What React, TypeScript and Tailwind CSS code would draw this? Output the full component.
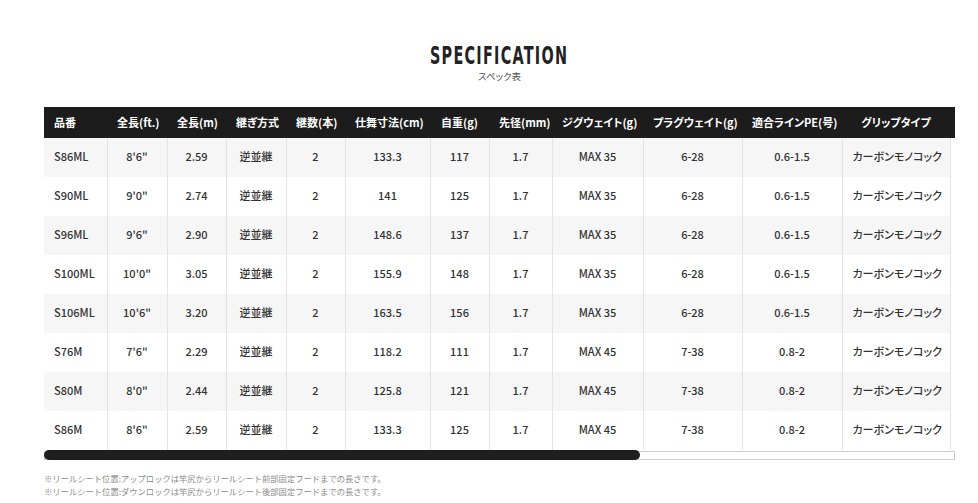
const columns = [
  { label: "品番", w: "w-[63px]" },
  { label: "全長(ft.)", w: "w-[60px]" },
  { label: "全長(m)", w: "w-[59px]" },
  { label: "継ぎ方式", w: "w-[60px]" },
  { label: "継数(本)", w: "w-[59px]" },
  { label: "仕舞寸法(cm)", w: "w-[85px]" },
  { label: "自重(g)", w: "w-[59px]" },
  { label: "先径(mm)", w: "w-[63px]" },
  { label: "ジグウェイト(g)", w: "w-[91px]" },
  { label: "プラグウェイト(g)", w: "w-[99px]" },
  { label: "適合ラインPE(号)", w: "w-[100px]" },
  { label: "グリップタイプ", w: "w-[108px]" },
];

const rows = [
  ["S86ML", "8'6\"", "2.59", "逆並継", "2", "133.3", "117", "1.7", "MAX 35", "6-28", "0.6-1.5", "カーボンモノコック"],
  ["S90ML", "9'0\"", "2.74", "逆並継", "2", "141", "125", "1.7", "MAX 35", "6-28", "0.6-1.5", "カーボンモノコック"],
  ["S96ML", "9'6\"", "2.90", "逆並継", "2", "148.6", "137", "1.7", "MAX 35", "6-28", "0.6-1.5", "カーボンモノコック"],
  ["S100ML", "10'0\"", "3.05", "逆並継", "2", "155.9", "148", "1.7", "MAX 35", "6-28", "0.6-1.5", "カーボンモノコック"],
  ["S106ML", "10'6\"", "3.20", "逆並継", "2", "163.5", "156", "1.7", "MAX 35", "6-28", "0.6-1.5", "カーボンモノコック"],
  ["S76M", "7'6\"", "2.29", "逆並継", "2", "118.2", "111", "1.7", "MAX 45", "7-38", "0.8-2", "カーボンモノコック"],
  ["S80M", "8'0\"", "2.44", "逆並継", "2", "125.8", "121", "1.7", "MAX 45", "7-38", "0.8-2", "カーボンモノコック"],
  ["S86M", "8'6\"", "2.59", "逆並継", "2", "133.3", "125", "1.7", "MAX 45", "7-38", "0.8-2", "カーボンモノコック"],
];

const font = {
  fontFamily: '"Noto Sans CJK JP", "Noto Sans", sans-serif',
  fontFeatureSettings: '"palt"',
};

export default function App() {
  return (
    <div className="min-h-screen bg-white text-[#333]" style={font}>
      <div className="ml-[44px] w-[911px] pt-[43px]">
        <div className="flex flex-col items-center">
          <h2
            className="text-[25px] leading-[26px] font-bold tracking-[2px] text-[#222] scale-x-[0.64]"
            style={{ fontFamily: '"Liberation Sans Narrow", "DejaVu Sans Condensed", "Liberation Sans", sans-serif' }}
          >
            SPECIFICATION
          </h2>
          <p className="mt-[1px] text-[9.5px] leading-[12px] text-[#555]">スペック表</p>
        </div>

        <div className="mt-[25px] w-[911px] overflow-hidden">
          <table className="table-fixed border-collapse w-[911px] text-[11px]">
            <colgroup>
              {columns.map((c) => (
                <col key={c.label} className={c.w} />
              ))}
              <col className="w-[5px]" />
            </colgroup>
            <thead>
              <tr className="bg-[#1c1c1c] text-white h-[31px]">
                {columns.map((c, i) => (
                  <th
                    key={c.label}
                    className={`font-bold whitespace-nowrap px-[10px] ${i === 0 ? "text-left" : "text-center"}`}
                  >
                    {c.label}
                  </th>
                ))}
                <th />
              </tr>
            </thead>
            <tbody>
              {rows.map((r, ri) => (
                <tr key={r[0]} className={`h-[39px] ${ri % 2 === 0 ? "bg-[#f6f6f6]" : "bg-white"}`}>
                  {r.map((cell, ci) => (
                    <td
                      key={ci}
                      className={`whitespace-nowrap px-[10px] pb-[2px] font-medium text-[#333] border-r border-[#e4e4e4] ${ci === 0 ? "text-left" : "text-center"}`}
                    >
                      {cell}
                    </td>
                  ))}
                  <td className="bg-white" />
                </tr>
              ))}
            </tbody>
          </table>
        </div>

        <div className="relative h-[10px] w-[911px]">
          <div className="absolute left-0 right-0 top-[1px] h-[9px] border border-[#cfcfcf] bg-white" />
          <div className="absolute left-0 top-0 h-[10px] w-[596px] rounded-full bg-[#1e1e1e]" />
        </div>

        <div
          className="mt-[12px] text-[8.3px] leading-[13px] text-[#8a8a8a]"
          style={{ fontFeatureSettings: "normal" }}
        >
          <p>※リールシート位置:アップロックは竿尻からリールシート前部固定フードまでの長さです。</p>
          <p>※リールシート位置:ダウンロックは竿尻からリールシート後部固定フードまでの長さです。</p>
        </div>
      </div>
    </div>
  );
}
